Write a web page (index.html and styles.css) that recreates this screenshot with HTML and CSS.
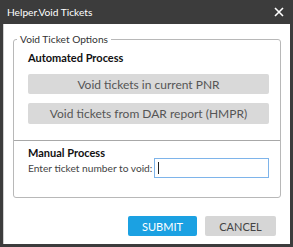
FILE: index.html
```html
<!DOCTYPE html>
<html lang="en">
<head>
    <meta charset="UTF-8">
    <title>Helper.Void Tickets</title>
    <link rel="stylesheet" href="styles.css">
</head>
<body>

<div class="window">
    <div class="titlebar">
        <span class="title">Helper.Void Tickets</span>
        <svg class="close" width="10" height="10" viewBox="0 0 10 10">
            <path d="M1 1 L9 9 M9 1 L1 9" stroke="#fff" stroke-width="1.6" fill="none"/>
        </svg>
    </div>

    <div class="content">
        <fieldset class="options">
            <legend>Void Ticket Options</legend>

            <div class="section auto">
                <div class="heading">Automated Process</div>
                <button class="action">Void tickets in current PNR</button>
                <button class="action">Void tickets from DAR report (HMPR)</button>
            </div>

            <div class="section manual">
                <div class="heading">Manual Process</div>
                <div class="field">
                    <label for="ticket">Enter ticket number to void:</label>
                    <div class="input"><span class="caret"></span></div>
                </div>
            </div>
        </fieldset>

        <div class="footer">
            <button class="btn submit">SUBMIT</button>
            <button class="btn cancel">CANCEL</button>
        </div>
    </div>
</div>

</body>
</html>
```

FILE: styles.css
```css
body {
    margin: 0;
    padding: 0;
    font-family: Lato, "Open Sans", sans-serif;
    font-size: 10px;
    color: #333;
    background: #fff;
}
.window {
    width: 293px;
    height: 247px;
    box-sizing: border-box;
    background: #3c3c3c;
    padding: 0 3px 3px 3px;
    display: flex;
    flex-direction: column;
}
.titlebar {
    height: 24px;
    display: flex;
    align-items: center;
    justify-content: space-between;
    padding: 0 6px 0 4px;
    color: #fff;
}
.title {
    font-size: 10.2px;
}
.close {
    display: block;
}
.content {
    flex: 1;
    background: #fff;
    border-left: 1px solid #d0d0d0;
    padding: 8px 9px 0 9px;
    display: flex;
    flex-direction: column;
}
.options {
    margin: 0;
    padding: 0;
    border: 1px solid #b8b8b8;
    border-radius: 3px;
    height: 166px;
    box-sizing: border-box;
}
.options legend {
    margin-left: 3px;
    padding: 0 3px;
    color: #333;
    font-size: 10.2px;
    line-height: 14px;
}
.section {
    padding: 0 11px 0 14px;
}
.auto {
    padding-top: 5px;
    padding-bottom: 16px;
    border-bottom: 1px solid #a8a8a8;
}
.heading {
    font-weight: bold;
    font-size: 11px;
    color: #111;
    line-height: 14px;
}
.action {
    display: block;
    width: 100%;
    height: 20px;
    margin-top: 9px;
    border: none;
    border-radius: 2px;
    background: #d9d9d9;
    color: #555;
    font-family: inherit;
    font-size: 12px;
    padding: 0;
}
.action + .action {
    height: 21px;
}
.manual {
    padding-top: 5px;
}
.field {
    display: flex;
    align-items: center;
    gap: 2px;
    margin-top: -2px;
}
.field label {
    color: #444;
    font-size: 10.2px;
}
.field .input {
    flex: 1;
    height: 20px;
    box-sizing: border-box;
    border: 1px solid #7eb4ea;
    padding: 3px 3px;
}
.caret {
    display: block;
    width: 1px;
    height: 12px;
    background: #222;
}
.footer {
    display: flex;
    justify-content: flex-end;
    gap: 8px;
    padding: 18px 5px 0 0;
}
.btn {
    height: 20px;
    border: none;
    border-radius: 2px;
    font-family: inherit;
    font-size: 11px;
    padding: 0;
}
.submit {
    width: 69px;
    background: #1ba1e2;
    color: #fff;
}
.cancel {
    width: 71px;
    background: #d6d6d6;
    color: #444;
}
```
